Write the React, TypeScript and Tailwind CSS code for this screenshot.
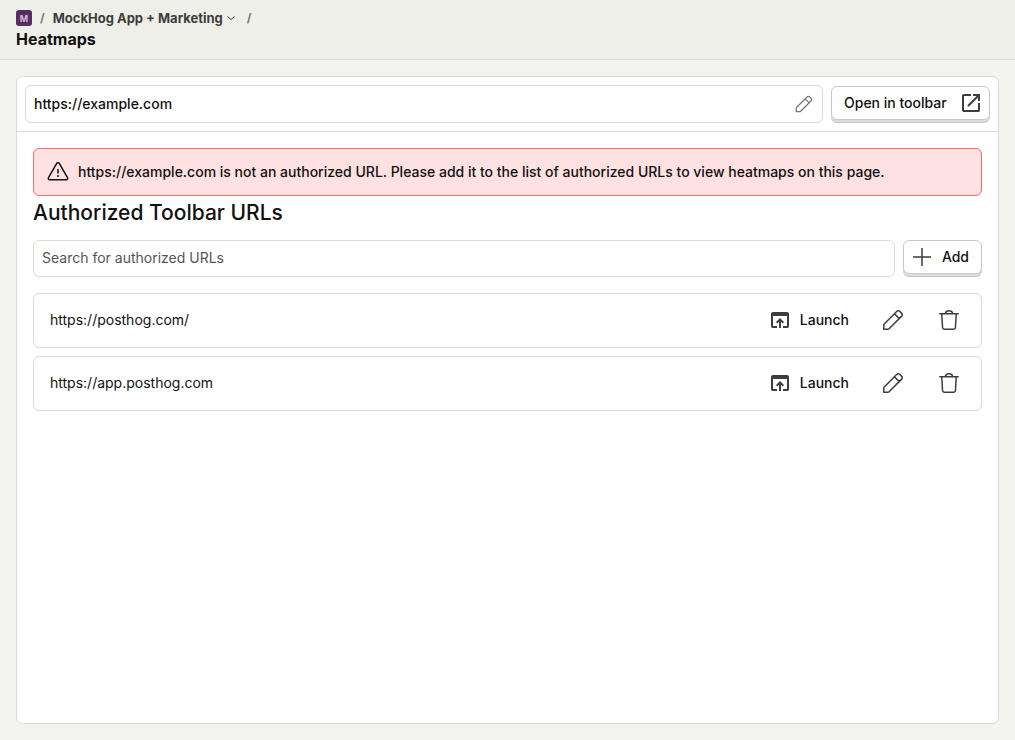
import { useState } from "react";
import type { ReactNode } from "react";

function Icon({ className = "size-6", children }: { className?: string; children: ReactNode }) {
  return (
    <svg viewBox="0 0 24 24" className={`shrink-0 ${className}`} fill="none" stroke="currentColor" strokeWidth="1.5" strokeLinejoin="round" aria-hidden="true">
      {children}
    </svg>
  );
}

function PencilIcon({ className }: { className?: string }) {
  return (
    <Icon className={className}>
      <path d="M2.75 21.25v-4.1c0-.5.2-.9.5-1.2L15.9 3.3a1.9 1.9 0 0 1 2.7 0l2.1 2.1a1.9 1.9 0 0 1 0 2.7L8.05 20.75c-.3.3-.7.5-1.2.5h-4.1ZM13.4 5.8l4.8 4.8" />
    </Icon>
  );
}

function TrashIcon() {
  return (
    <Icon>
      <path d="M2.25 5.75h19.5M4.75 5.75l.8 13.75c.06.98.7 1.75 1.7 1.75h9.5c1 0 1.64-.77 1.7-1.75l.8-13.75M8.25 5.5C8.7 3.8 10.1 2.75 12 2.75s3.3 1.05 3.75 2.75" />
    </Icon>
  );
}

function OpenInNewIcon() {
  return (
    <svg viewBox="0 0 24 24" className="size-6 shrink-0" fill="currentColor" aria-hidden="true">
      <path d="M5 21q-.825 0-1.412-.587Q3 19.825 3 19V5q0-.825.588-1.413Q4.175 3 5 3h7v2H5v14h14v-7h2v7q0 .825-.587 1.413Q19.825 21 19 21Zm4.7-5.3-1.4-1.4L17.6 5H14V3h7v7h-2V6.4Z" />
    </svg>
  );
}

function OpenInAppIcon() {
  return (
    <svg viewBox="0 0 24 24" className="size-6 shrink-0" fill="currentColor" aria-hidden="true">
      <path d="M5 20q-.825 0-1.412-.587Q3 18.825 3 18V6q0-.825.588-1.413Q4.175 4 5 4h14q.825 0 1.413.587Q21 5.175 21 6v12q0 .825-.587 1.413Q19.825 20 19 20h-4v-2h4V8H5v10h4v2Zm6 0v-6.2l-1.6 1.6L8 14l4-4 4 4-1.4 1.4-1.6-1.6V20Z" />
    </svg>
  );
}

function RaisedButton({ className, children }: { className: string; children: ReactNode }) {
  return (
    <button type="button" className={`mb-[3px] flex h-[34px] shrink-0 items-center justify-between rounded-md border border-[#c9c8c9] bg-white font-medium shadow-[0_2px_0_#dddbdd,0_3px_0_#c9c8c9] ${className}`}>
      {children}
    </button>
  );
}

function UrlRow({ url }: { url: string }) {
  return (
    <li className="flex h-[55px] items-start rounded-md border border-[#dadbd2] px-4 pt-1.5">
      <span className="min-w-0 flex-1 truncate leading-10">{url}</span>
      <div className="flex items-center gap-4 text-[#3d3d3d]">
        <button type="button" className="flex h-10 items-center gap-2 px-2 font-medium">
          <OpenInAppIcon />
          <span className="text-[#111111]">Launch</span>
        </button>
        <button type="button" aria-label={`Edit ${url}`} className="flex size-10 items-center justify-center"><PencilIcon /></button>
        <button type="button" aria-label={`Delete ${url}`} className="-mr-1 flex size-10 items-center justify-center"><TrashIcon /></button>
      </div>
    </li>
  );
}

const urls = ["https://posthog.com/", "https://app.posthog.com"];

export default function App() {
  const [pageUrl, setPageUrl] = useState("https://example.com");
  const [search, setSearch] = useState("");

  return (
    <div className="flex min-h-screen flex-col bg-[#f3f4ef] font-['Inter',sans-serif] text-sm leading-5 text-[#111111]">
      <header className="border-b border-[#dadbd2] bg-[#eeefe9] px-4 pt-2 pb-2">
        <nav aria-label="Breadcrumb" className="flex h-5 items-center text-[13px] font-bold text-[#3d3d3d]">
          <span className="flex size-4 items-center justify-center rounded-[3px] bg-[#572c5f] text-[9px] leading-none text-[#d6b5dc]">M</span>
          <span className="mx-2 text-xs text-[#7a7b77]">/</span>
          <button type="button" className="flex items-center gap-0.5">
            MockHog App + Marketing
            <Icon className="size-3"><path strokeWidth="2" d="m5 9 7 6 7-6" /></Icon>
          </button>
          <span className="ml-2.5 text-xs text-[#7a7b77]">/</span>
        </nav>
        <h1 className="text-base leading-[23px] font-bold">Heatmaps</h1>
      </header>

      <main className="flex flex-1 flex-col p-4">
        <div className="flex-1 rounded-md border border-[#dadbd2] bg-white">
          <div className="flex items-center gap-2 border-b border-[#dadbd2] p-2">
            <label className="flex h-[38px] min-w-0 flex-1 items-center rounded-md border border-[#dadbd2] px-2">
              <input aria-label="Page URL" value={pageUrl} onChange={(e) => setPageUrl(e.target.value)} className="min-w-0 flex-1 bg-transparent font-medium outline-none" />
              <PencilIcon className="size-5 text-[#777777]" />
            </label>
            <RaisedButton className="min-w-[159px] gap-2 pr-1.5 pl-3">
              Open in toolbar
              <span className="text-[#3d3d3d]"><OpenInNewIcon /></span>
            </RaisedButton>
          </div>

          <div className="p-4">
            <div role="alert" className="flex h-12 items-center gap-2 rounded-md border border-[#f96b6e] bg-[#fee2e2] px-3 font-medium">
              <Icon>
                <path d="M10.7 3.4c.6-1 2-1 2.6 0l8.2 14.2c.6 1-.1 2.15-1.3 2.15H3.8c-1.2 0-1.9-1.15-1.3-2.15L10.7 3.4ZM12 9v4.5" />
                <circle cx="12" cy="16" r="1" fill="currentColor" stroke="none" />
              </Icon>
              <p>{pageUrl} is not an authorized URL. Please add it to the list of authorized URLs to view heatmaps on this page.</p>
            </div>

            <h2 className="mb-2.5 text-[21px] leading-[34px] font-medium">Authorized Toolbar URLs</h2>

            <div className="flex items-center gap-2">
              <input type="search" aria-label="Search for authorized URLs" placeholder="Search for authorized URLs" value={search} onChange={(e) => setSearch(e.target.value)} className="h-[37px] min-w-0 flex-1 rounded-md border border-[#dadbd2] px-2 pb-0.5 outline-none placeholder:text-[#545454]" />
              <RaisedButton className="gap-2 pr-3 pl-1.5">
                <span className="text-[#3d3d3d]"><Icon><path d="M12 3v18M3 12h18" /></Icon></span>
                Add
              </RaisedButton>
            </div>

            <ul className="mt-4 flex flex-col gap-2">
              {urls.filter((url) => url.includes(search)).map((url) => <UrlRow key={url} url={url} />)}
            </ul>
          </div>
        </div>
      </main>
    </div>
  );
}
